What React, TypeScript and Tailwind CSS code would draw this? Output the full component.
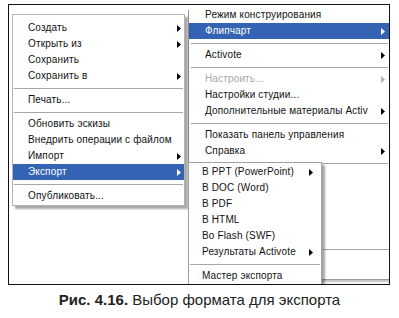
import type { ReactNode } from 'react';

type Item =
  | { sep: true }
  | { label: string; arrow?: boolean; active?: boolean; disabled?: boolean };

const fileMenu: Item[] = [
  { label: 'Создать', arrow: true },
  { label: 'Открыть из', arrow: true },
  { label: 'Сохранить' },
  { label: 'Сохранить в', arrow: true },
  { sep: true },
  { label: 'Печать...' },
  { sep: true },
  { label: 'Обновить эскизы' },
  { label: 'Внедрить операции с файлом' },
  { label: 'Импорт', arrow: true },
  { label: 'Экспорт', arrow: true, active: true },
  { sep: true },
  { label: 'Опубликовать...' },
];

const mainMenu: Item[] = [
  { label: 'Флипчарт', arrow: true, active: true },
  { sep: true },
  { label: 'Activote', arrow: true },
  { sep: true },
  { label: 'Настроить...', arrow: true, disabled: true },
  { label: 'Настройки студии...' },
  { label: 'Дополнительные материалы Activ', arrow: true },
  { sep: true },
  { label: 'Показать панель управления' },
  { label: 'Справка', arrow: true },
  { sep: true },
];

const exportMenu: Item[] = [
  { label: 'В PPT (PowerPoint)', arrow: true },
  { label: 'В DOC (Word)' },
  { label: 'В PDF' },
  { label: 'В HTML' },
  { label: 'Во Flash (SWF)' },
  { label: 'Результаты Activote', arrow: true },
  { sep: true },
  { label: 'Мастер экспорта' },
];

function Arrow({ color }: { color: string }) {
  return (
    <svg width="4" height="7" viewBox="0 0 4 7" className="shrink-0">
      <polygon points="0,0 4,3.5 0,7" fill={color} />
    </svg>
  );
}

function MenuRows({ items, pl, pr, sepClass }: { items: Item[]; pl: string; pr: string; sepClass: string }) {
  return (
    <>
      {items.map((item, i) => {
        if ('sep' in item) {
          return (
            <div key={i} className="h-[8px] flex items-center">
              <div className={`h-px bg-[#a6a6a6] ${sepClass}`} />
            </div>
          );
        }
        const color = item.active ? 'text-white bg-[#3463b4]' : item.disabled ? 'text-[#a8a8a8]' : 'text-[#111]';
        return (
          <div key={i} className={`h-[16px] flex items-center justify-between whitespace-nowrap ${pl} ${pr} ${color}`}>
            <span>{item.label}</span>
            {item.arrow && <Arrow color={item.active ? '#fff' : item.disabled ? '#b0b0b0' : '#000'} />}
          </div>
        );
      })}
    </>
  );
}

function Panel({ className, children }: { className: string; children: ReactNode }) {
  return <div className={`absolute bg-white ${className}`}>{children}</div>;
}

export default function App() {
  return (
    <div className="w-[399px] h-[318px] bg-white font-['Liberation_Sans',Arial,sans-serif] text-[10px] tracking-[0.15px] leading-[16px]">
      <div className="ml-[8px] pt-[4px]">
        <div className="relative w-[382px] h-[281px] border border-[#111] overflow-hidden">
          {/* main menu, its top is cut off */}
          <Panel className="left-[179px] top-[5px] w-[206px] h-[270px] border-l border-b border-[#9a9a9a] shadow-[1px_2px_2px_rgba(0,0,0,0.25)] overflow-hidden">
            <div className="mt-[-3px]">
              <div className="h-[16px] pl-[16px] whitespace-nowrap text-[#111]">Режим конструирования</div>
              <MenuRows items={mainMenu} pl="pl-[16px]" pr="pr-[9px]" sepClass="ml-[2px] w-[197px]" />
              <div className="h-[78px]" />
              <div className="h-[8px] flex items-center">
                <div className="h-px bg-[#a6a6a6] ml-[134px] w-[66px]" />
              </div>
            </div>
          </Panel>

          {/* file menu */}
          <Panel className="left-[3px] top-[9px] w-[173px] border border-[#b4b4b4] pt-[5px] pb-[1px] shadow-[3px_3px_2px_rgba(0,0,0,0.35)]">
            <MenuRows items={fileMenu} pl="pl-[15px]" pr="pr-[3px]" sepClass="mx-[1px] flex-1" />
          </Panel>

          {/* export submenu */}
          <Panel className="left-[179px] top-[157px] w-[134px] h-[140px] border border-[#a0a0a0] pt-[1px] shadow-[3px_3px_2px_rgba(0,0,0,0.35)]">
            <MenuRows items={exportMenu} pl="pl-[13px]" pr="pr-[8px]" sepClass="mx-[1px] flex-1" />
          </Panel>
        </div>
      </div>
      <p className="mt-[6px] text-center text-[15px] tracking-normal leading-[18px] text-[#222]">
        <b>Рис. 4.16.</b> Выбор формата для экспорта
      </p>
    </div>
  );
}
